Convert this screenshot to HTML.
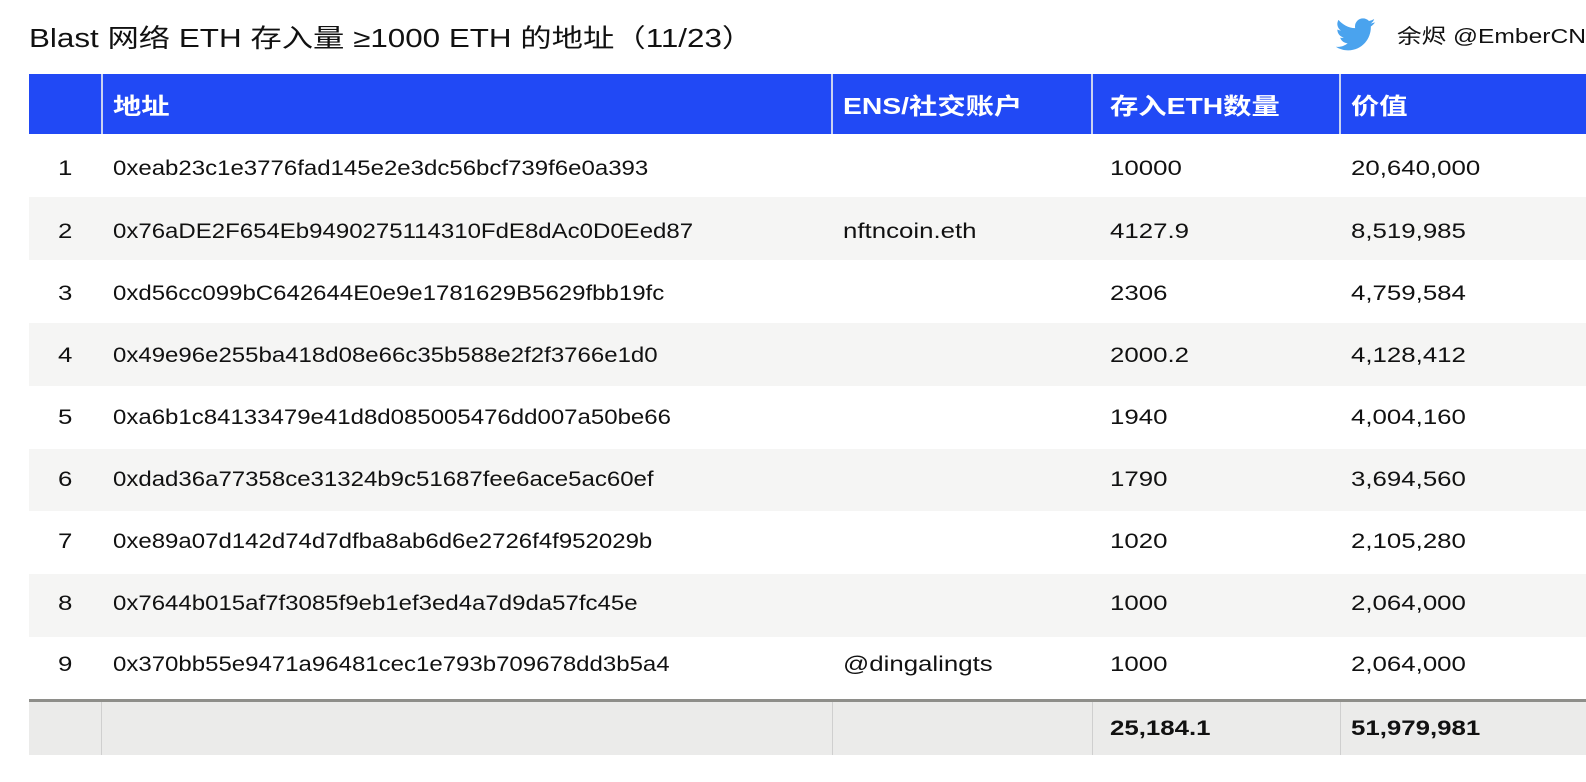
<!DOCTYPE html>
<html><head><meta charset="utf-8"><style>
body{margin:0;width:1586px;height:782px;background:#fff;font-family:"Liberation Sans","Noto Sans CJK SC",sans-serif;color:#111;overflow:hidden;position:relative}
.s{display:inline-block;transform:scaleX(1.23);transform-origin:left center;white-space:nowrap}
.a .s{transform:scaleX(1.143)}
.title{position:absolute;left:29px;top:18px;font-size:25.5px}
.tw{position:absolute;left:1336px;top:12px;font-size:20px}
.row{position:absolute;left:29px;width:1557px}
.c{position:absolute;top:0;bottom:0;display:flex;align-items:center;font-size:21px}
.hd{top:74px;height:60px;background:#2149f5;color:#fff}
.hd .c{font-size:23px;font-weight:bold}
.hd .b{position:absolute;top:0;bottom:0;width:2px;background:#c9d2f0}
.g{background:#f5f5f4}
.ft{top:702px;height:53px;background:#ebebea;font-weight:bold}
.ft .b{position:absolute;top:0;bottom:0;width:1px;background:#cfcfcf}
</style></head><body>
<div class="title"><span class="s">Blast 网络 ETH 存入量 ≥1000 ETH 的地址（11/23）</span></div>
<div class="tw"><svg style="position:absolute;left:0;top:6px" width="40" height="34" viewBox="0 0 24 20"><path fill="#4aa3ee" d="M23.6 2.3c-.9.4-1.8.6-2.8.8 1-.6 1.8-1.5 2.1-2.7-.9.6-2 1-3.1 1.200C18.9.6 17.6 0 16.2 0c-2.7 0-4.8 2.2-4.8 4.8 0 .4 0 .8.1 1.1C7.5 5.7 3.9 3.8 1.5.9c-.4.7-.7 1.6-.7 2.4 0 1.7.9 3.2 2.2 4-.8 0-1.5-.2-2.2-.6v.1c0 2.3 1.7 4.3 3.9 4.7-.4.1-.8.2-1.3.2-.3 0-.6 0-.9-.1.6 1.9 2.4 3.3 4.500 3.4-1.7 1.3-3.7 2.1-6 2.1-.4 0-.8 0-1.2-.1 2.1 1.4 4.7 2.2 7.4 2.2 8.9 0 13.7-7.4 13.7-13.7v-.6c1-.7 1.8-1.5 2.5-2.5z"/></svg><span class="s" style="position:absolute;left:61px;top:8px">余烬 @EmberCN</span></div>

<div class="row hd">
<div class="b" style="left:72px"></div><div class="b" style="left:802px"></div><div class="b" style="left:1062px"></div><div class="b" style="left:1310px"></div>
<div class="c" style="left:84px"><span class="s">地址</span></div>
<div class="c" style="left:814px"><span class="s">ENS/社交账户</span></div>
<div class="c" style="left:1081px"><span class="s">存入ETH数量</span></div>
<div class="c" style="left:1322px"><span class="s">价值</span></div>
</div>

<div class="row" style="top:137px;height:63px"><div class="c" style="left:29px"><span class="s">1</span></div><div class="c a" style="left:84px"><span class="s">0xeab23c1e3776fad145e2e3dc56bcf739f6e0a393</span></div><div class="c" style="left:1081px"><span class="s">10000</span></div><div class="c" style="left:1322px"><span class="s">20,640,000</span></div></div>
<div class="row g" style="top:196.9px;height:62.9px"></div>
<div class="row" style="top:200px;height:63px"><div class="c" style="left:29px"><span class="s">2</span></div><div class="c a" style="left:84px"><span class="s">0x76aDE2F654Eb9490275114310FdE8dAc0D0Eed87</span></div><div class="c" style="left:814px"><span class="s">nftncoin.eth</span></div><div class="c" style="left:1081px"><span class="s">4127.9</span></div><div class="c" style="left:1322px"><span class="s">8,519,985</span></div></div>
<div class="row" style="top:262px;height:63px"><div class="c" style="left:29px"><span class="s">3</span></div><div class="c a" style="left:84px"><span class="s">0xd56cc099bC642644E0e9e1781629B5629fbb19fc</span></div><div class="c" style="left:1081px"><span class="s">2306</span></div><div class="c" style="left:1322px"><span class="s">4,759,584</span></div></div>
<div class="row g" style="top:322.7px;height:62.9px"></div>
<div class="row" style="top:324px;height:63px"><div class="c" style="left:29px"><span class="s">4</span></div><div class="c a" style="left:84px"><span class="s">0x49e96e255ba418d08e66c35b588e2f2f3766e1d0</span></div><div class="c" style="left:1081px"><span class="s">2000.2</span></div><div class="c" style="left:1322px"><span class="s">4,128,412</span></div></div>
<div class="row" style="top:386px;height:63px"><div class="c" style="left:29px"><span class="s">5</span></div><div class="c a" style="left:84px"><span class="s">0xa6b1c84133479e41d8d085005476dd007a50be66</span></div><div class="c" style="left:1081px"><span class="s">1940</span></div><div class="c" style="left:1322px"><span class="s">4,004,160</span></div></div>
<div class="row g" style="top:448.5px;height:62.9px"></div>
<div class="row" style="top:448px;height:63px"><div class="c" style="left:29px"><span class="s">6</span></div><div class="c a" style="left:84px"><span class="s">0xdad36a77358ce31324b9c51687fee6ace5ac60ef</span></div><div class="c" style="left:1081px"><span class="s">1790</span></div><div class="c" style="left:1322px"><span class="s">3,694,560</span></div></div>
<div class="row" style="top:510px;height:63px"><div class="c" style="left:29px"><span class="s">7</span></div><div class="c a" style="left:84px"><span class="s">0xe89a07d142d74d7dfba8ab6d6e2726f4f952029b</span></div><div class="c" style="left:1081px"><span class="s">1020</span></div><div class="c" style="left:1322px"><span class="s">2,105,280</span></div></div>
<div class="row g" style="top:574.3px;height:62.7px"></div>
<div class="row" style="top:572px;height:63px"><div class="c" style="left:29px"><span class="s">8</span></div><div class="c a" style="left:84px"><span class="s">0x7644b015af7f3085f9eb1ef3ed4a7d9da57fc45e</span></div><div class="c" style="left:1081px"><span class="s">1000</span></div><div class="c" style="left:1322px"><span class="s">2,064,000</span></div></div>
<div class="row" style="top:633px;height:63px"><div class="c" style="left:29px"><span class="s">9</span></div><div class="c a" style="left:84px"><span class="s">0x370bb55e9471a96481cec1e793b709678dd3b5a4</span></div><div class="c" style="left:814px"><span class="s">@dingalingts</span></div><div class="c" style="left:1081px"><span class="s">1000</span></div><div class="c" style="left:1322px"><span class="s">2,064,000</span></div></div>
<div class="row" style="top:699px;height:3px;background:#8e8e8a"></div>
<div class="row ft">
<div class="b" style="left:72px"></div><div class="b" style="left:803px"></div><div class="b" style="left:1063px"></div><div class="b" style="left:1311px"></div>
<div class="c" style="left:1081px"><span class="s">25,184.1</span></div>
<div class="c" style="left:1322px"><span class="s">51,979,981</span></div>
</div>
</body></html>
